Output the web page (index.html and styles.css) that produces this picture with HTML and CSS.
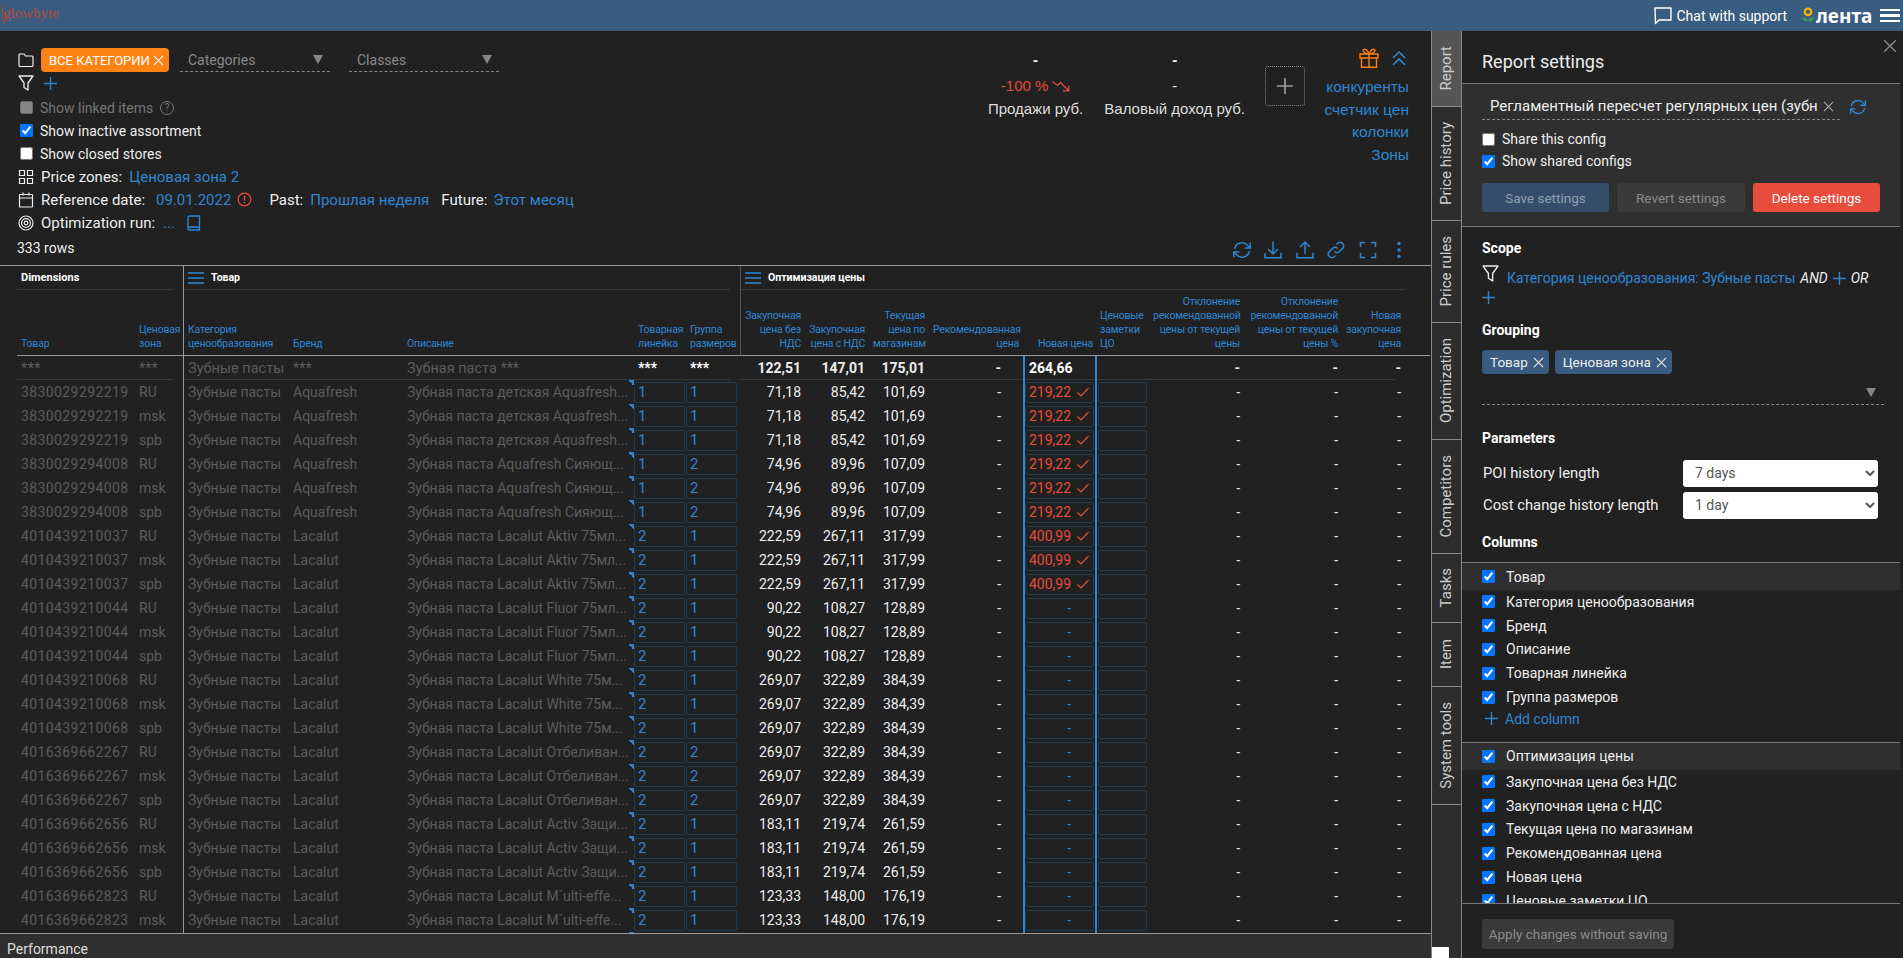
FILE: index.html
```html
<!DOCTYPE html>
<html lang="ru">
<head>
    <meta charset="UTF-8">
    <title>Price optimization</title>
    <link rel="stylesheet" href="styles.css">
</head>
<body>
    <svg class="sprite" xmlns="http://www.w3.org/2000/svg">
        <symbol id="i-x" viewBox="0 0 12 12"><path d="M1 1l10 10M11 1L1 11" fill="none" stroke="currentColor" stroke-width="1.2"/></symbol>
        <symbol id="i-plus" viewBox="0 0 12 12"><path d="M6 0v12M0 6h12" fill="none" stroke="currentColor" stroke-width="1.3"/></symbol>
        <symbol id="i-filter" viewBox="0 0 16 16"><path d="M1 1h14L10 8v7l-4-2.5V8z" fill="none" stroke="currentColor" stroke-width="1.3" stroke-linejoin="round"/></symbol>
        <symbol id="i-check" viewBox="0 0 12 12"><path d="M.5 6.5L4 10l7.5-8" fill="none" stroke="currentColor" stroke-width="1.2"/></symbol>
        <symbol id="i-menu" viewBox="0 0 16 12"><path d="M0 1h16M0 6h16M0 11h16" fill="none" stroke="currentColor" stroke-width="1.6"/></symbol>
        <symbol id="i-sync" viewBox="0 0 20 20"><path d="M2.5 9a7.6 7.6 0 0 1 13.2-3.6L18 8M17.5 11a7.6 7.6 0 0 1-13.2 3.6L2 12M18.2 2.6V8h-5.4M1.800 17.400V12h5.400" fill="none" stroke="currentColor" stroke-width="1.5"/></symbol>
    </svg>

    <header class="topbar">
        <div class="logo">
            <svg class="logo-swirl" viewBox="0 0 6 20"><path d="M3.500 1C1.500 6 2 13 4 19" fill="none" stroke="currentColor" stroke-width="1"/></svg>
            <span>glowbyte</span>
        </div>
        <div class="topbar-right">
            <svg class="chat-icon" viewBox="0 0 18 18"><path d="M1 1h16v12H5l-3.500 3.500z" fill="none" stroke="currentColor" stroke-width="1.4" stroke-linejoin="round"/></svg>
            <span class="chat-text">Chat with support</span>
            <svg class="lenta-icon" viewBox="0 0 16 18"><circle cx="8" cy="6" r="5" fill="#f5b400"/><circle cx="8" cy="6" r="2.4" fill="#395c80"/><path d="M1 12c3 0 6 1 7 5 1-4 4-5 7-5-1 3-4 5-7 5s-6-2-7-5z" fill="#3aa655"/></svg>
            <span class="lenta-text">лента</span>
            <div class="burger"><i></i><i></i><i></i></div>
        </div>
    </header>

    <div class="app">
        <main class="main">
            <section class="controls">
                <div class="filters">
                    <div class="filter-row first">
                        <svg class="row-icon" viewBox="0 0 16 15"><path d="M1 2.500a1 1 0 0 1 1-1h4l1.500 2H14a1 1 0 0 1 1 1V13a1 1 0 0 1-1 1H2a1 1 0 0 1-1-1z" fill="none" stroke="currentColor" stroke-width="1.2"/></svg>
                        <span class="tag-orange">ВСЕ КАТЕГОРИИ <svg class="x-icon"><use href="#i-x"/></svg></span>
                        <div class="combo"><span>Categories</span><i class="tri"></i></div>
                        <div class="combo"><span>Classes</span><i class="tri"></i></div>
                    </div>
                    <div class="filter-row second">
                        <svg class="row-icon"><use href="#i-filter"/></svg>
                        <svg class="plus-blue"><use href="#i-plus"/></svg>
                    </div>
                    <label class="filter-row check muted"><input type="checkbox" disabled> Show linked items <span class="help">?</span></label>
                    <label class="filter-row check"><input type="checkbox" checked> Show inactive assortment</label>
                    <label class="filter-row check"><input type="checkbox"> Show closed stores</label>
                    <div class="filter-row big">
                        <svg class="row-icon" viewBox="0 0 16 16"><path d="M1.500 1.500h5v5h-5zM9.500 1.500h5v5h-5zM1.500 9.500h5v5h-5zM9.500 9.500h5v5h-5z" fill="none" stroke="currentColor" stroke-width="1.2"/></svg>
                        <span class="lbl">Price zones:</span><a class="val">Ценовая зона 2</a>
                    </div>
                    <div class="filter-row big">
                        <svg class="row-icon" viewBox="0 0 16 16"><path d="M2 2.500h12a.5.5 0 0 1 .5.5v11.500a.5.5 0 0 1-.5.5H2a.5.5 0 0 1-.5-.5V3a.5.5 0 0 1 .5-.5zM1.500 6h13M5 .5v3M11 .5v3" fill="none" stroke="currentColor" stroke-width="1.2"/></svg>
                        <span class="lbl lbl-date">Reference date:</span><a class="val">09.01.2022</a>
                        <svg class="warn" viewBox="0 0 16 16"><circle cx="8" cy="8" r="6.800" fill="none" stroke="currentColor" stroke-width="1.3"/><path d="M8 3.800v5.200M8 10.600v1.600" stroke="currentColor" stroke-width="1.5"/></svg>
                        <span class="lbl past">Past:</span><a class="val">Прошлая неделя</a>
                        <span class="lbl future">Future:</span><a class="val">Этот месяц</a>
                    </div>
                    <div class="filter-row big">
                        <svg class="row-icon" viewBox="0 0 16 16"><circle cx="8" cy="8" r="7" fill="none" stroke="currentColor" stroke-width="1.2"/><circle cx="8" cy="8" r="4.400" fill="none" stroke="currentColor" stroke-width="1.2"/><circle cx="8" cy="8" r="1.800" fill="none" stroke="currentColor" stroke-width="1.2"/></svg>
                        <span class="lbl lbl-run">Optimization run:</span><a class="val">...</a>
                        <svg class="book" viewBox="0 0 14 16"><path d="M1 13V2.500A1.500 1.500 0 0 1 2.500 1h10v14h-10A1.500 1.500 0 0 1 1 13.500 1.500 1.500 0 0 1 2.500 12h10" fill="none" stroke="currentColor" stroke-width="1.3"/></svg>
                    </div>
                    <div class="row-count">333 rows</div>
                </div>

                <div class="controls-right">
                    <div class="summary">
                        <div class="kpi kpi-sales">
                            <div class="kpi-value">-</div>
                            <div class="kpi-delta down">-100 % <svg class="trend" viewBox="0 0 18 12"><path d="M.5 1.500l5 4 3-3 8 8M11 10.800h5.800V5.500" fill="none" stroke="currentColor" stroke-width="1.3"/></svg></div>
                            <div class="kpi-label">Продажи руб.</div>
                        </div>
                        <div class="kpi kpi-income">
                            <div class="kpi-value">-</div>
                            <div class="kpi-delta">-</div>
                            <div class="kpi-label">Валовый доход руб.</div>
                        </div>
                        <div class="add-box"><svg><use href="#i-plus"/></svg></div>
                        <div class="quick-links">
                            <div class="quick-icons">
                                <svg class="gift" viewBox="0 0 20 20"><path d="M1 6h18v4H1zM2.500 10h15v9.200h-15zM10 6v13.200M10 6C8 1.500 5.500.500 4.500 1.500S5 6 10 6zM10 6c2-4.500 4.500-5.500 5.500-4.500S15 6 10 6z" fill="none" stroke="currentColor" stroke-width="1.4"/></svg>
                                <svg class="chevrons" viewBox="0 0 14 15"><path d="M1 7l6-6 6 6M1 14l6-6 6 6" fill="none" stroke="currentColor" stroke-width="1.6"/></svg>
                            </div>
                            <a>конкуренты</a>
                            <a>счетчик цен</a>
                            <a>колонки</a>
                            <a>Зоны</a>
                        </div>
                    </div>
                    <div class="table-tools">
                        <svg viewBox="0 0 20 20"><use href="#i-sync"/></svg>
                        <svg viewBox="0 0 20 20"><path d="M10 1.500v12M5 9l5 5 5-5M2 13v4.800h16V13" fill="none" stroke="currentColor" stroke-width="1.5"/></svg>
                        <svg viewBox="0 0 20 20"><path d="M10 14V2M5 7l5-5 5 5M2 13v4.800h16V13" fill="none" stroke="currentColor" stroke-width="1.5"/></svg>
                        <svg viewBox="0 0 20 20"><path d="M8.500 11.500a3.600 3.600 0 0 0 5 0l3.500-3.500a3.600 3.600 0 0 0-5-5L10.500 4.500M11.500 8.500a3.600 3.600 0 0 0-5 0L3 12a3.600 3.600 0 0 0 5 5l1.500-1.500" fill="none" stroke="currentColor" stroke-width="1.5"/></svg>
                        <svg viewBox="0 0 20 20"><path d="M2.500 7V2.500H7M13 2.500h4.500V7M17.500 13v4.500H13M7 17.500H2.500V13" fill="none" stroke="currentColor" stroke-width="1.5"/></svg>
                        <svg viewBox="0 0 20 20"><circle cx="10" cy="3.500" r="1.700" fill="currentColor"/><circle cx="10" cy="10" r="1.700" fill="currentColor"/><circle cx="10" cy="16.500" r="1.700" fill="currentColor"/></svg>
                    </div>
                </div>
            </section>

            <div class="table-wrap">
                <table class="grid">
                    <colgroup>
                        <col class="c-118"><col class="c-48"><col class="c-106"><col class="c-114"><col class="c-231"><col class="c-52"><col class="c-54">
                        <col class="c-65"><col class="c-64"><col class="c-60"><col class="c-94"><col class="c-74"><col class="c-52"><col class="c-95"><col class="c-98"><col class="c-63"><col class="c-25">
                    </colgroup>
                    <thead>
                        <tr class="group-row">
                            <th colspan="2" class="gap-line">Dimensions</th>
                            <th colspan="5" class="sep gap-line"><svg class="menu-icon"><use href="#i-menu"/></svg>Товар</th>
                            <th colspan="9" class="group-sep gap-line full-line"><svg class="menu-icon"><use href="#i-menu"/></svg>Оптимизация цены</th>
                            <th></th>
                        </tr>
                        <tr class="head-row">
                            <th>Товар</th><th>Ценовая зона</th>
                            <th class="sep">Категория ценообразования</th><th>Бренд</th><th>Описание</th><th>Товарная линейка</th><th>Группа размеров</th>
                            <th class="group-sep right">Закупочная цена без НДС</th><th class="right">Закупочная цена с НДС</th><th class="right">Текущая цена по магазинам</th><th class="right">Рекомендованная цена</th><th class="right">Новая цена</th>
                            <th class="notes">Ценовые заметки ЦО</th><th class="right">Отклонение рекомендованной цены от текущей цены</th><th class="right">Отклонение рекомендованной цены от текущей цены %</th><th class="right">Новая закупочная цена</th><th></th>
                        </tr>
                    </thead>
                    <tbody>
                        <tr class="total">
                            <td class="dim">***</td><td class="dim short">***</td><td class="dim sep">Зубные пасты</td><td class="dim">***</td><td class="dim">Зубная паста ***</td><td class="star">***</td><td class="star short">***</td>
                            <td class="num">122,51</td><td class="num">147,01</td><td class="num">175,01</td><td class="num rec">-</td><td class="new-price first-price">264,66</td><td></td><td class="num">-</td><td class="num">-</td><td class="num short">-</td><td class="blank"></td>
                        </tr>
                        <tr><td class="dim">3830029292219</td><td class="dim">RU</td><td class="dim sep">Зубные пасты</td><td class="dim">Aquafresh</td><td class="dim desc">Зубная паста детская Aquafresh...</td><td><div class="cell-input">1</div></td><td><div class="cell-input">1</div></td><td class="num">71,18</td><td class="num">85,42</td><td class="num">101,69</td><td class="num rec">-</td><td class="new-price"><div class="price-box"><span>219,22</span><svg><use href="#i-check"/></svg></div></td><td><div class="cell-input"></div></td><td class="num">-</td><td class="num">-</td><td class="num">-</td><td></td></tr>
                        <tr><td class="dim">3830029292219</td><td class="dim">msk</td><td class="dim sep">Зубные пасты</td><td class="dim">Aquafresh</td><td class="dim desc">Зубная паста детская Aquafresh...</td><td><div class="cell-input">1</div></td><td><div class="cell-input">1</div></td><td class="num">71,18</td><td class="num">85,42</td><td class="num">101,69</td><td class="num rec">-</td><td class="new-price"><div class="price-box"><span>219,22</span><svg><use href="#i-check"/></svg></div></td><td><div class="cell-input"></div></td><td class="num">-</td><td class="num">-</td><td class="num">-</td><td></td></tr>
                        <tr><td class="dim">3830029292219</td><td class="dim">spb</td><td class="dim sep">Зубные пасты</td><td class="dim">Aquafresh</td><td class="dim desc">Зубная паста детская Aquafresh...</td><td><div class="cell-input">1</div></td><td><div class="cell-input">1</div></td><td class="num">71,18</td><td class="num">85,42</td><td class="num">101,69</td><td class="num rec">-</td><td class="new-price"><div class="price-box"><span>219,22</span><svg><use href="#i-check"/></svg></div></td><td><div class="cell-input"></div></td><td class="num">-</td><td class="num">-</td><td class="num">-</td><td></td></tr>
                        <tr><td class="dim">3830029294008</td><td class="dim">RU</td><td class="dim sep">Зубные пасты</td><td class="dim">Aquafresh</td><td class="dim desc">Зубная паста Aquafresh Сияющ...</td><td><div class="cell-input">1</div></td><td><div class="cell-input">2</div></td><td class="num">74,96</td><td class="num">89,96</td><td class="num">107,09</td><td class="num rec">-</td><td class="new-price"><div class="price-box"><span>219,22</span><svg><use href="#i-check"/></svg></div></td><td><div class="cell-input"></div></td><td class="num">-</td><td class="num">-</td><td class="num">-</td><td></td></tr>
                        <tr><td class="dim">3830029294008</td><td class="dim">msk</td><td class="dim sep">Зубные пасты</td><td class="dim">Aquafresh</td><td class="dim desc">Зубная паста Aquafresh Сияющ...</td><td><div class="cell-input">1</div></td><td><div class="cell-input">2</div></td><td class="num">74,96</td><td class="num">89,96</td><td class="num">107,09</td><td class="num rec">-</td><td class="new-price"><div class="price-box"><span>219,22</span><svg><use href="#i-check"/></svg></div></td><td><div class="cell-input"></div></td><td class="num">-</td><td class="num">-</td><td class="num">-</td><td></td></tr>
                        <tr><td class="dim">3830029294008</td><td class="dim">spb</td><td class="dim sep">Зубные пасты</td><td class="dim">Aquafresh</td><td class="dim desc">Зубная паста Aquafresh Сияющ...</td><td><div class="cell-input">1</div></td><td><div class="cell-input">2</div></td><td class="num">74,96</td><td class="num">89,96</td><td class="num">107,09</td><td class="num rec">-</td><td class="new-price"><div class="price-box"><span>219,22</span><svg><use href="#i-check"/></svg></div></td><td><div class="cell-input"></div></td><td class="num">-</td><td class="num">-</td><td class="num">-</td><td></td></tr>
                        <tr><td class="dim">4010439210037</td><td class="dim">RU</td><td class="dim sep">Зубные пасты</td><td class="dim">Lacalut</td><td class="dim desc">Зубная паста Lacalut Aktiv 75мл...</td><td><div class="cell-input">2</div></td><td><div class="cell-input">1</div></td><td class="num">222,59</td><td class="num">267,11</td><td class="num">317,99</td><td class="num rec">-</td><td class="new-price"><div class="price-box"><span>400,99</span><svg><use href="#i-check"/></svg></div></td><td><div class="cell-input"></div></td><td class="num">-</td><td class="num">-</td><td class="num">-</td><td></td></tr>
                        <tr><td class="dim">4010439210037</td><td class="dim">msk</td><td class="dim sep">Зубные пасты</td><td class="dim">Lacalut</td><td class="dim desc">Зубная паста Lacalut Aktiv 75мл...</td><td><div class="cell-input">2</div></td><td><div class="cell-input">1</div></td><td class="num">222,59</td><td class="num">267,11</td><td class="num">317,99</td><td class="num rec">-</td><td class="new-price"><div class="price-box"><span>400,99</span><svg><use href="#i-check"/></svg></div></td><td><div class="cell-input"></div></td><td class="num">-</td><td class="num">-</td><td class="num">-</td><td></td></tr>
                        <tr><td class="dim">4010439210037</td><td class="dim">spb</td><td class="dim sep">Зубные пасты</td><td class="dim">Lacalut</td><td class="dim desc">Зубная паста Lacalut Aktiv 75мл...</td><td><div class="cell-input">2</div></td><td><div class="cell-input">1</div></td><td class="num">222,59</td><td class="num">267,11</td><td class="num">317,99</td><td class="num rec">-</td><td class="new-price"><div class="price-box"><span>400,99</span><svg><use href="#i-check"/></svg></div></td><td><div class="cell-input"></div></td><td class="num">-</td><td class="num">-</td><td class="num">-</td><td></td></tr>
                        <tr><td class="dim">4010439210044</td><td class="dim">RU</td><td class="dim sep">Зубные пасты</td><td class="dim">Lacalut</td><td class="dim desc">Зубная паста Lacalut Fluor 75мл...</td><td><div class="cell-input">2</div></td><td><div class="cell-input">1</div></td><td class="num">90,22</td><td class="num">108,27</td><td class="num">128,89</td><td class="num rec">-</td><td class="new-price"><div class="price-box empty"><span>-</span></div></td><td><div class="cell-input"></div></td><td class="num">-</td><td class="num">-</td><td class="num">-</td><td></td></tr>
                        <tr><td class="dim">4010439210044</td><td class="dim">msk</td><td class="dim sep">Зубные пасты</td><td class="dim">Lacalut</td><td class="dim desc">Зубная паста Lacalut Fluor 75мл...</td><td><div class="cell-input">2</div></td><td><div class="cell-input">1</div></td><td class="num">90,22</td><td class="num">108,27</td><td class="num">128,89</td><td class="num rec">-</td><td class="new-price"><div class="price-box empty"><span>-</span></div></td><td><div class="cell-input"></div></td><td class="num">-</td><td class="num">-</td><td class="num">-</td><td></td></tr>
                        <tr><td class="dim">4010439210044</td><td class="dim">spb</td><td class="dim sep">Зубные пасты</td><td class="dim">Lacalut</td><td class="dim desc">Зубная паста Lacalut Fluor 75мл...</td><td><div class="cell-input">2</div></td><td><div class="cell-input">1</div></td><td class="num">90,22</td><td class="num">108,27</td><td class="num">128,89</td><td class="num rec">-</td><td class="new-price"><div class="price-box empty"><span>-</span></div></td><td><div class="cell-input"></div></td><td class="num">-</td><td class="num">-</td><td class="num">-</td><td></td></tr>
                        <tr><td class="dim">4010439210068</td><td class="dim">RU</td><td class="dim sep">Зубные пасты</td><td class="dim">Lacalut</td><td class="dim desc">Зубная паста Lacalut White 75м...</td><td><div class="cell-input">2</div></td><td><div class="cell-input">1</div></td><td class="num">269,07</td><td class="num">322,89</td><td class="num">384,39</td><td class="num rec">-</td><td class="new-price"><div class="price-box empty"><span>-</span></div></td><td><div class="cell-input"></div></td><td class="num">-</td><td class="num">-</td><td class="num">-</td><td></td></tr>
                        <tr><td class="dim">4010439210068</td><td class="dim">msk</td><td class="dim sep">Зубные пасты</td><td class="dim">Lacalut</td><td class="dim desc">Зубная паста Lacalut White 75м...</td><td><div class="cell-input">2</div></td><td><div class="cell-input">1</div></td><td class="num">269,07</td><td class="num">322,89</td><td class="num">384,39</td><td class="num rec">-</td><td class="new-price"><div class="price-box empty"><span>-</span></div></td><td><div class="cell-input"></div></td><td class="num">-</td><td class="num">-</td><td class="num">-</td><td></td></tr>
                        <tr><td class="dim">4010439210068</td><td class="dim">spb</td><td class="dim sep">Зубные пасты</td><td class="dim">Lacalut</td><td class="dim desc">Зубная паста Lacalut White 75м...</td><td><div class="cell-input">2</div></td><td><div class="cell-input">1</div></td><td class="num">269,07</td><td class="num">322,89</td><td class="num">384,39</td><td class="num rec">-</td><td class="new-price"><div class="price-box empty"><span>-</span></div></td><td><div class="cell-input"></div></td><td class="num">-</td><td class="num">-</td><td class="num">-</td><td></td></tr>
                        <tr><td class="dim">4016369662267</td><td class="dim">RU</td><td class="dim sep">Зубные пасты</td><td class="dim">Lacalut</td><td class="dim desc">Зубная паста Lacalut Отбеливан...</td><td><div class="cell-input">2</div></td><td><div class="cell-input">2</div></td><td class="num">269,07</td><td class="num">322,89</td><td class="num">384,39</td><td class="num rec">-</td><td class="new-price"><div class="price-box empty"><span>-</span></div></td><td><div class="cell-input"></div></td><td class="num">-</td><td class="num">-</td><td class="num">-</td><td></td></tr>
                        <tr><td class="dim">4016369662267</td><td class="dim">msk</td><td class="dim sep">Зубные пасты</td><td class="dim">Lacalut</td><td class="dim desc">Зубная паста Lacalut Отбеливан...</td><td><div class="cell-input">2</div></td><td><div class="cell-input">2</div></td><td class="num">269,07</td><td class="num">322,89</td><td class="num">384,39</td><td class="num rec">-</td><td class="new-price"><div class="price-box empty"><span>-</span></div></td><td><div class="cell-input"></div></td><td class="num">-</td><td class="num">-</td><td class="num">-</td><td></td></tr>
                        <tr><td class="dim">4016369662267</td><td class="dim">spb</td><td class="dim sep">Зубные пасты</td><td class="dim">Lacalut</td><td class="dim desc">Зубная паста Lacalut Отбеливан...</td><td><div class="cell-input">2</div></td><td><div class="cell-input">2</div></td><td class="num">269,07</td><td class="num">322,89</td><td class="num">384,39</td><td class="num rec">-</td><td class="new-price"><div class="price-box empty"><span>-</span></div></td><td><div class="cell-input"></div></td><td class="num">-</td><td class="num">-</td><td class="num">-</td><td></td></tr>
                        <tr><td class="dim">4016369662656</td><td class="dim">RU</td><td class="dim sep">Зубные пасты</td><td class="dim">Lacalut</td><td class="dim desc">Зубная паста Lacalut Activ Защи...</td><td><div class="cell-input">2</div></td><td><div class="cell-input">1</div></td><td class="num">183,11</td><td class="num">219,74</td><td class="num">261,59</td><td class="num rec">-</td><td class="new-price"><div class="price-box empty"><span>-</span></div></td><td><div class="cell-input"></div></td><td class="num">-</td><td class="num">-</td><td class="num">-</td><td></td></tr>
                        <tr><td class="dim">4016369662656</td><td class="dim">msk</td><td class="dim sep">Зубные пасты</td><td class="dim">Lacalut</td><td class="dim desc">Зубная паста Lacalut Activ Защи...</td><td><div class="cell-input">2</div></td><td><div class="cell-input">1</div></td><td class="num">183,11</td><td class="num">219,74</td><td class="num">261,59</td><td class="num rec">-</td><td class="new-price"><div class="price-box empty"><span>-</span></div></td><td><div class="cell-input"></div></td><td class="num">-</td><td class="num">-</td><td class="num">-</td><td></td></tr>
                        <tr><td class="dim">4016369662656</td><td class="dim">spb</td><td class="dim sep">Зубные пасты</td><td class="dim">Lacalut</td><td class="dim desc">Зубная паста Lacalut Activ Защи...</td><td><div class="cell-input">2</div></td><td><div class="cell-input">1</div></td><td class="num">183,11</td><td class="num">219,74</td><td class="num">261,59</td><td class="num rec">-</td><td class="new-price"><div class="price-box empty"><span>-</span></div></td><td><div class="cell-input"></div></td><td class="num">-</td><td class="num">-</td><td class="num">-</td><td></td></tr>
                        <tr><td class="dim">4016369662823</td><td class="dim">RU</td><td class="dim sep">Зубные пасты</td><td class="dim">Lacalut</td><td class="dim desc">Зубная паста Lacalut M`ulti-effe...</td><td><div class="cell-input">2</div></td><td><div class="cell-input">1</div></td><td class="num">123,33</td><td class="num">148,00</td><td class="num">176,19</td><td class="num rec">-</td><td class="new-price"><div class="price-box empty"><span>-</span></div></td><td><div class="cell-input"></div></td><td class="num">-</td><td class="num">-</td><td class="num">-</td><td></td></tr>
                        <tr><td class="dim">4016369662823</td><td class="dim">msk</td><td class="dim sep">Зубные пасты</td><td class="dim">Lacalut</td><td class="dim desc">Зубная паста Lacalut M`ulti-effe...</td><td><div class="cell-input">2</div></td><td><div class="cell-input">1</div></td><td class="num">123,33</td><td class="num">148,00</td><td class="num">176,19</td><td class="num rec">-</td><td class="new-price"><div class="price-box empty"><span>-</span></div></td><td><div class="cell-input"></div></td><td class="num">-</td><td class="num">-</td><td class="num">-</td><td></td></tr>
                        <tr class="next-row"><td></td><td></td><td class="sep"></td><td></td><td class="desc"></td><td colspan="6"></td><td class="new-price"></td><td colspan="5"></td></tr>
                    </tbody>
                </table>
            </div>
            <footer class="perf">Performance</footer>
        </main>

        <nav class="tabs">
            <div class="tab tab-report active"><span>Report</span></div>
            <div class="tab tab-history"><span>Price history</span></div>
            <div class="tab tab-rules"><span>Price rules</span></div>
            <div class="tab tab-optim"><span>Optimization</span></div>
            <div class="tab tab-comp"><span>Competitors</span></div>
            <div class="tab tab-tasks"><span>Tasks</span></div>
            <div class="tab tab-item"><span>Item</span></div>
            <div class="tab tab-system"><span>System tools</span></div>
            <div class="tabs-rest"><i class="corner"></i></div>
        </nav>

        <aside class="panel">
            <div class="panel-title">
                <h2>Report settings</h2>
                <svg class="panel-close"><use href="#i-x"/></svg>
            </div>
            <div class="config">
                <div class="config-line">
                    <div class="config-name"><span>Регламентный пересчет регулярных цен (зубн</span><svg class="x-grey"><use href="#i-x"/></svg></div>
                    <svg class="config-sync" viewBox="0 0 20 20"><use href="#i-sync"/></svg>
                </div>
                <label class="config-check"><input type="checkbox"> Share this config</label>
                <label class="config-check"><input type="checkbox" checked> Show shared configs</label>
                <div class="config-buttons">
                    <button class="btn btn-save">Save settings</button>
                    <button class="btn btn-revert">Revert settings</button>
                    <button class="btn btn-delete">Delete settings</button>
                </div>
            </div>
            <div class="panel-body">
                <h3 class="scope-title">Scope</h3>
                <div class="scope-line">
                    <svg class="scope-filter"><use href="#i-filter"/></svg>
                    <a>Категория ценообразования: Зубные пасты</a> <em>AND</em> <svg class="plus-blue"><use href="#i-plus"/></svg> <em>OR</em>
                </div>
                <div class="scope-plus"><svg class="plus-blue"><use href="#i-plus"/></svg></div>

                <h3 class="grouping-title">Grouping</h3>
                <div class="chips">
                    <span class="chip">Товар <svg><use href="#i-x"/></svg></span>
                    <span class="chip">Ценовая зона <svg><use href="#i-x"/></svg></span>
                </div>
                <div class="chips-line"><i class="tri"></i></div>

                <h3 class="params-title">Parameters</h3>
                <div class="param"><span>POI history length</span><select><option>7 days</option></select></div>
                <div class="param"><span>Cost change history length</span><select><option>1 day</option></select></div>

                <h3 class="columns-title">Columns</h3>
                <div class="col-group">
                    <label class="col-row head"><input type="checkbox" checked> Товар</label>
                    <label class="col-row"><input type="checkbox" checked> Категория ценообразования</label>
                    <label class="col-row"><input type="checkbox" checked> Бренд</label>
                    <label class="col-row"><input type="checkbox" checked> Описание</label>
                    <label class="col-row"><input type="checkbox" checked> Товарная линейка</label>
                    <label class="col-row"><input type="checkbox" checked> Группа размеров</label>
                    <a class="add-column"><svg><use href="#i-plus"/></svg>Add column</a>
                </div>
                <div class="col-group">
                    <label class="col-row head"><input type="checkbox" checked> Оптимизация цены</label>
                    <label class="col-row"><input type="checkbox" checked> Закупочная цена без НДС</label>
                    <label class="col-row"><input type="checkbox" checked> Закупочная цена с НДС</label>
                    <label class="col-row"><input type="checkbox" checked> Текущая цена по магазинам</label>
                    <label class="col-row"><input type="checkbox" checked> Рекомендованная цена</label>
                    <label class="col-row"><input type="checkbox" checked> Новая цена</label>
                    <label class="col-row"><input type="checkbox" checked> Ценовые заметки ЦО</label>
                </div>
            </div>
            <div class="panel-foot"><button class="btn btn-apply">Apply changes without saving</button></div>
        </aside>
    </div>
</body>
</html>
```

FILE: styles.css
```css
* {
    box-sizing: border-box;
}
html, body {
    margin: 0;
    height: 100%;
    overflow: hidden;
}
body {
    background: #212121;
    color: #eee;
    font-family: Roboto, "Noto Sans", sans-serif;
    font-size: 14px;
}
a {
    color: #2f86d3;
}
svg {
    display: block;
    flex: none;
}
.sprite {
    display: none;
}

/* top bar */
.topbar {
    height: 31px;
    background: #395c80;
    display: flex;
    justify-content: space-between;
    align-items: center;
}
.logo {
    font-family: "Liberation Serif", serif;
    font-size: 15px;
    color: #b8482f;
    display: flex;
    align-items: flex-start;
    height: 31px;
}
.logo span {
    margin: 5px 0 0 -3px;
}
.logo-swirl {
    width: 6px;
    height: 20px;
    margin-top: 5px;
}
.topbar-right {
    display: flex;
    align-items: center;
    padding-right: 3px;
}
.chat-icon {
    width: 18px;
    height: 18px;
    color: #fff;
}
.chat-text {
    margin-left: 5px;
    color: #fff;
}
.lenta-icon {
    width: 14px;
    height: 17px;
    margin-left: 14px;
    margin-bottom: 3px;
}
.lenta-text {
    font-family: "Noto Sans", sans-serif;
    font-weight: 700;
    font-size: 19px;
    line-height: 20px;
    color: #fff;
    width: 65px;
    padding-left: 1px;
}
.burger {
    width: 20px;
    display: flex;
    flex-direction: column;
    gap: 3px;
}
.burger i {
    height: 2.5px;
    background: #fff;
}

.app {
    display: flex;
    height: 927px;
}
.main {
    width: 1431px;
    display: flex;
    flex-direction: column;
}

/* controls above the table */
.controls {
    height: 235px;
    display: flex;
    border-bottom: 1px solid #999;
    flex: none;
}
.filters {
    width: 760px;
    padding: 17px 0 0 18px;
}
.filter-row {
    height: 23px;
    display: flex;
    align-items: center;
    white-space: nowrap;
}
.filter-row.first {
    height: 24px;
}
.filter-row.second {
    height: 24px;
    align-items: flex-start;
    padding-top: 3px;
}
.filter-row.big {
    font-size: 15px;
}
.row-icon {
    width: 16px;
    height: 16px;
    color: #eee;
}
.tag-orange {
    margin-left: 7px;
    height: 24px;
    width: 128px;
    background: #ff8214;
    color: #fff;
    border-radius: 4px;
    font-size: 13px;
    display: flex;
    align-items: center;
    justify-content: space-between;
    padding: 0 5px 0 8px;
}
.x-icon {
    width: 11px;
    height: 11px;
}
.combo {
    width: 150px;
    height: 24px;
    margin-left: 11px;
    border-bottom: 1px dashed #888;
    display: flex;
    align-items: center;
    justify-content: space-between;
    padding: 0 7px 0 8px;
    color: #888;
}
.combo + .combo {
    margin-left: 19px;
}
.tri {
    width: 0;
    height: 0;
    border-left: 5px solid transparent;
    border-right: 5px solid transparent;
    border-top: 9px solid #888;
}
.plus-blue {
    width: 13px;
    height: 13px;
    color: #2f86d3;
}
.filter-row.second .plus-blue {
    margin: 2px 0 0 10px;
}
.check {
    padding-left: 2px;
    gap: 7px;
}
.check input,
.config-check input,
.col-row input {
    margin: 0;
    width: 13px;
    height: 13px;
    accent-color: #0075ff;
}
.muted {
    color: #777;
}
.muted input {
    opacity: .7;
    background: #aaa;
}
.help {
    width: 14px;
    height: 14px;
    border: 1px solid #777;
    border-radius: 50%;
    font-size: 10px;
    text-align: center;
    line-height: 12px;
}
.lbl {
    margin-left: 7px;
}
.val {
    margin-left: 7px;
}
.lbl-date {
    margin-right: 4px;
}
.lbl-run {
    margin-right: 1px;
}
.past {
    margin-left: 17px;
}
.future {
    margin-left: 12px;
    margin-right: -1px;
}
.warn {
    width: 15px;
    height: 15px;
    margin-left: 6px;
    color: #e74c3c;
}
.book {
    width: 14px;
    height: 16px;
    margin-left: 12px;
    color: #2f86d3;
}
.row-count {
    margin: 3px 0 0 -1px;
    height: 23px;
    line-height: 23px;
}

.controls-right {
    flex: 1;
    display: flex;
    flex-direction: column;
    justify-content: space-between;
    padding: 17px 22px 5px 0;
}
.summary {
    display: flex;
    justify-content: flex-end;
    font-family: "Liberation Sans", Arial, sans-serif;
    font-size: 15px;
}
.kpi {
    text-align: center;
    white-space: nowrap;
}
.kpi-income {
    margin-left: 21px;
}
.kpi-value {
    height: 24px;
    line-height: 24px;
    font-weight: 700;
    color: #fff;
}
.kpi-delta {
    height: 26px;
    line-height: 26px;
    margin-top: 1px;
    display: flex;
    justify-content: center;
    align-items: center;
    gap: 4px;
}
.down {
    color: #e74c3c;
}
.trend {
    width: 18px;
    height: 12px;
}
.kpi-label {
    line-height: 20px;
    color: #ddd;
}
.add-box {
    width: 40px;
    height: 40px;
    margin: 18px 0 0 20px;
    border: 1px dotted #888;
    border-radius: 3px;
    color: #999;
    display: flex;
    align-items: center;
    justify-content: center;
}
.add-box svg {
    width: 16px;
    height: 16px;
}
.quick-links {
    width: 104px;
    display: flex;
    flex-direction: column;
    align-items: flex-end;
    font-size: 15.5px;
    line-height: 22.7px;
}
.quick-icons {
    display: flex;
    align-items: center;
    gap: 13px;
    height: 20px;
    margin: 0 3px 8px 0;
}
.gift {
    width: 20px;
    height: 20px;
    color: #ff7f0e;
}
.chevrons {
    width: 14px;
    height: 15px;
    color: #2f86d3;
}
.table-tools {
    display: flex;
    justify-content: flex-end;
    gap: 11.4px;
    color: #2f86d3;
}
.table-tools svg {
    width: 20px;
    height: 20px;
}

/* table */
.table-wrap {
    flex: none;
    height: 668px;
    overflow: hidden;
    padding-left: 17px;
    border-bottom: 1px solid #999;
}
.grid {
    table-layout: fixed;
    width: 1413px;
    border-collapse: separate;
    border-spacing: 0;
}
.c-118 { width: 118px; }
.c-48 { width: 48px; }
.c-106 { width: 106px; }
.c-114 { width: 114px; }
.c-231 { width: 231px; }
.c-52 { width: 52px; }
.c-54 { width: 54px; }
.c-65 { width: 65px; }
.c-64 { width: 64px; }
.c-60 { width: 60px; }
.c-94 { width: 94px; }
.c-74 { width: 74px; }
.c-95 { width: 95px; }
.c-98 { width: 98px; }
.c-63 { width: 63px; }
.c-25 { width: 25px; }

.grid th,
.grid td {
    padding: 0 4px;
    font-weight: 400;
    text-align: left;
}
.grid .group-row th {
    height: 24px;
    padding-bottom: 2px;
    font-size: 11px;
    font-weight: 700;
    color: #fff;
    white-space: nowrap;
}
.grid .group-row .sep,
.grid .group-row .group-sep {
    font-size: 10.5px;
}
.group-row .menu-icon {
    display: inline-block;
    width: 16px;
    height: 12px;
    color: #2f86d3;
    vertical-align: -3px;
    margin-right: 7px;
}
.gap-line {
    background: linear-gradient(#383838, #383838) left bottom / calc(100% - 10px) 1px no-repeat;
}
.group-row .full-line {
    background-size: 100% 1px;
}
.head-row th {
    height: 66px;
    font-size: 10.5px;
    letter-spacing: -.2px;
    line-height: 14px;
    color: #2f86d3;
    vertical-align: bottom;
    padding-bottom: 4px;
    border-bottom: 1px solid #999;
}
.head-row th.right {
    text-align: right;
}
.head-row th.notes {
    padding: 0 4px 4px 3px;
}
.grid .sep {
    border-left: 1px solid #999;
}
.grid .group-sep {
    border-left: 1px solid #555;
}

.grid td {
    height: 24px;
    white-space: nowrap;
    overflow: hidden;
    color: #eee;
}
.grid tbody td:first-child {
    letter-spacing: .4px;
}
td.dim {
    color: #5c5c5c;
}
td.desc {
    overflow: visible;
    background: linear-gradient(225deg, #2f86d3 50%, transparent 50%) right top / 6px 6px no-repeat;
}
td.num {
    text-align: right;
}
td.rec {
    padding-right: 22px;
}
.total td {
    font-weight: 700;
    background: linear-gradient(#383838, #383838) left bottom / 100% 1px no-repeat;
}
.grid .total td.dim {
    font-weight: 400;
    font-size: 14.5px;
}
.total td.short {
    background-size: calc(100% - 10px) 1px;
}
.total td.star {
    color: #fff;
}
.total td.blank {
    background: none;
}
.grid td.new-price {
    padding: 0;
    border-left: 2px solid #2f86d3;
    border-right: 2px solid #2f86d3;
}
.grid td.first-price {
    color: #fff;
    padding-left: 4px;
}
.cell-input,
.price-box {
    height: 21px;
    border: 1px solid #1f3c55;
    border-radius: 2px;
    color: #2f86d3;
    font-size: 15px;
    line-height: 19px;
    padding-left: 3px;
    margin-left: -4px;
    width: 51px;
}
.new-price + td .cell-input {
    width: 49px;
    margin-left: -3px;
}
.price-box {
    width: 69px;
    margin-left: 0;
    font-size: 14px;
    color: #e74c3c;
    display: flex;
    justify-content: flex-end;
    align-items: center;
    gap: 6px;
    padding-right: 4px;
}
.price-box svg {
    width: 12px;
    height: 12px;
}
.price-box.empty {
    color: #2f86d3;
    padding-right: 22px;
}
.perf {
    flex: 1;
    background: #2f2f2f;
    color: #ddd;
    padding: 3px 0 0 7px;
    line-height: 24px;
    overflow: hidden;
}

/* vertical tabs */
.tabs {
    width: 31px;
    display: flex;
    flex-direction: column;
    border-left: 1px solid #888;
    border-right: 1px solid #888;
    background: #2d2d2d;
    flex: none;
}
.tab {
    border-bottom: 1px solid #888;
    display: flex;
    align-items: center;
    justify-content: center;
    color: #ccc;
    font-size: 15px;
    padding-right: 2px;
}
.tab span {
    writing-mode: vertical-rl;
    transform: rotate(180deg);
    white-space: nowrap;
}
.tab.active {
    background: #555;
}
.tab-report { height: 76px; }
.tab-history { height: 114px; }
.tab-rules { height: 102px; }
.tab-optim { height: 117px; }
.tab-comp { height: 114px; }
.tab-tasks { height: 69px; }
.tab-item { height: 64px; }
.tab-system { height: 118px; }
.tabs-rest {
    flex: 1;
    display: flex;
    align-items: flex-end;
}
.corner {
    width: 17px;
    height: 11px;
    background: #fff;
}

/* settings panel */
.panel {
    width: 441px;
    display: flex;
    flex-direction: column;
    padding-right: 3px;
}
.panel-title {
    height: 53px;
    flex: none;
    display: flex;
    justify-content: space-between;
    border-bottom: 1px solid #777;
    padding-left: 20px;
}
.panel-title h2 {
    margin: 0;
    font-size: 18px;
    font-weight: 400;
    line-height: 62px;
}
.panel-close {
    width: 14px;
    height: 14px;
    margin: 8px 3px 0 0;
    color: #888;
}
.config {
    height: 143px;
    flex: none;
    background: #2f2f2f;
    border-bottom: 1px solid #777;
    padding: 9px 20px 0;
}
.config-line {
    display: flex;
    align-items: center;
    gap: 9px;
}
.config-name {
    width: 358px;
    height: 27px;
    border-bottom: 1px dashed #888;
    display: flex;
    align-items: center;
    justify-content: space-between;
    padding: 0 6px 0 8px;
    white-space: nowrap;
    overflow: hidden;
    font-size: 15px;
}
.config-name span {
    overflow: hidden;
}
.x-grey {
    width: 11px;
    height: 11px;
    color: #aaa;
    margin-left: 5px;
}
.config-sync {
    width: 18px;
    height: 18px;
    color: #2f86d3;
}
.config-check {
    height: 22px;
    display: flex;
    align-items: center;
    gap: 7px;
}
.config-line + .config-check {
    margin-top: 8px;
}
.config-buttons {
    display: flex;
    gap: 8px;
    margin-top: 11px;
}
.btn {
    height: 29px;
    border: 0;
    border-radius: 3px;
    font-family: inherit;
    font-size: 13.5px;
    width: 127px;
}
.btn-save {
    background: #344d69;
    color: #90a0b0;
}
.btn-revert {
    background: #3a3a3a;
    color: #8c8c8c;
    width: 128px;
}
.btn-delete {
    background: #e74c3c;
    color: #fff;
}
.panel-body {
    flex: none;
    height: 676px;
    overflow: hidden;
    padding-top: 11px;
}
.panel-body h3 {
    margin: 0 0 0 20px;
    font-size: 14px;
    font-weight: 700;
    line-height: 20px;
    color: #fff;
}
.scope-line {
    margin: 10px 0 0 20px;
    display: flex;
    align-items: center;
    gap: 5px;
    white-space: nowrap;
    height: 20px;
}
.scope-line em {
    color: #eee;
}
.scope-filter {
    width: 17px;
    height: 17px;
    margin-right: 3px;
    margin-top: -9px;
    color: #eee;
}
.scope-plus {
    margin: 3px 0 0 20px;
    height: 16px;
}
.panel-body .grouping-title {
    margin-top: 13px;
}
.chips {
    display: flex;
    gap: 6px;
    margin: 10px 0 0 20px;
    font-size: 13.5px;
}
.chip {
    height: 24px;
    background: #395c80;
    border-radius: 4px;
    display: flex;
    align-items: center;
    gap: 5px;
    padding: 0 5px 0 8px;
    color: #eee;
}
.chip svg {
    width: 11px;
    height: 11px;
}
.chips-line {
    width: 402px;
    height: 31px;
    margin-left: 20px;
    border-bottom: 1px dashed #888;
    display: flex;
    justify-content: flex-end;
    align-items: center;
    padding: 6px 8px 0 0;
}
.panel-body .params-title {
    margin-top: 23px;
}
.param {
    display: flex;
    justify-content: space-between;
    align-items: center;
    margin: 0 22px 0 21px;
    height: 32px;
    font-size: 14.8px;
}
.params-title + .param {
    margin-top: 9px;
}
.param select {
    width: 195px;
    height: 27px;
    border: 0;
    border-radius: 3px;
    background: #fff;
    color: #555;
    font-family: inherit;
    font-size: 14px;
    padding-left: 8px;
}
.panel-body .columns-title {
    margin-top: 11px;
}
.col-group {
    border-top: 1px solid #777;
    padding-bottom: 13px;
}
.columns-title + .col-group {
    margin-top: 10px;
}
.col-row {
    height: 23.8px;
    display: flex;
    align-items: center;
    gap: 11px;
    padding-left: 20px;
}
.col-row.head {
    height: 27px;
    background: #2f2f2f;
}
.add-column {
    display: flex;
    align-items: center;
    height: 20px;
    padding-left: 23px;
    gap: 7px;
}
.add-column svg {
    width: 13px;
    height: 13px;
}
.panel-foot {
    flex: 1;
    border-top: 1px solid #777;
    padding: 15px 20px 0;
}
.btn-apply {
    width: 192px;
    height: 30px;
    background: #3a3a3a;
    color: #8c8c8c;
}
```
